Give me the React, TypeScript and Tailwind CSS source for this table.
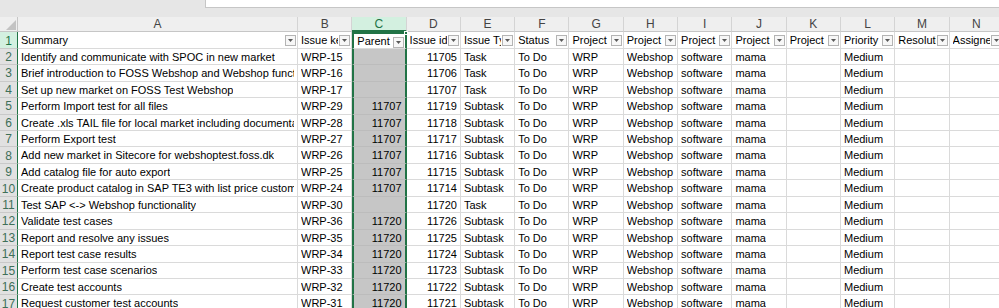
import type { ReactNode } from 'react'

const LETTERS = ['A', 'B', 'C', 'D', 'E', 'F', 'G', 'H', 'I', 'J', 'K', 'L', 'M', 'N']
const HEADERS = ['Summary', 'Issue key', 'Parent Id', 'Issue id', 'Issue Type', 'Status', 'Project key', 'Project name', 'Project type', 'Project lead', 'Project description', 'Priority', 'Resolution', 'Assignee']

// summary, key, parent, id, type
const ISSUES: [string, string, string, string, string][] = [
  ['Identify and communicate with SPOC in new market', 'WRP-15', '', '11705', 'Task'],
  ['Brief introduction to FOSS Webshop and Webshop functionality', 'WRP-16', '', '11706', 'Task'],
  ['Set up new market on FOSS Test Webshop', 'WRP-17', '', '11707', 'Task'],
  ['Perform Import test for all files', 'WRP-29', '11707', '11719', 'Subtask'],
  ['Create .xls TAIL file for local market including documentation', 'WRP-28', '11707', '11718', 'Subtask'],
  ['Perform Export test', 'WRP-27', '11707', '11717', 'Subtask'],
  ['Add new market in Sitecore for webshoptest.foss.dk', 'WRP-26', '11707', '11716', 'Subtask'],
  ['Add catalog file for auto export', 'WRP-25', '11707', '11715', 'Subtask'],
  ['Create product catalog in SAP TE3 with list price customer', 'WRP-24', '11707', '11714', 'Subtask'],
  ['Test SAP <-> Webshop functionality', 'WRP-30', '', '11720', 'Task'],
  ['Validate test cases', 'WRP-36', '11720', '11726', 'Subtask'],
  ['Report and resolve any issues', 'WRP-35', '11720', '11725', 'Subtask'],
  ['Report test case results', 'WRP-34', '11720', '11724', 'Subtask'],
  ['Perform test case scenarios', 'WRP-33', '11720', '11723', 'Subtask'],
  ['Create test accounts', 'WRP-32', '11720', '11722', 'Subtask'],
  ['Request customer test accounts', 'WRP-31', '11720', '11721', 'Subtask'],
]

function FilterButton() {
  return (
    <span className="absolute right-px top-[3px] w-[11px] h-[11px] border border-[#b4b4b4] bg-[#f7f7f7] flex items-center justify-center">
      <svg width="5" height="3" viewBox="0 0 5 3"><polygon points="0,0 5,0 2.5,3" fill="#595959" /></svg>
    </span>
  )
}

function Cell({ col, children, right, head }: { col: number; children?: ReactNode; right?: boolean; head?: boolean }) {
  const sel = col === 2
  let cls = 'relative flex items-center pt-px px-[3px] border-b border-[#dadada] '
  if (sel) cls += 'border-x-2 border-x-[#217346] ' + (head ? 'bg-white border-t-2 border-t-[#217346] ' : 'bg-[#c6c6c6] border-b-[#bcbcbc] ')
  else cls += 'border-r bg-white '
  if (right) cls += 'justify-end '
  return (
    <div className={cls}>
      <span className={`min-w-0 overflow-hidden whitespace-nowrap ${head ? 'flex-1 mr-[10px]' : ''}`}>{children}</span>
      {head && <FilterButton />}
      {head && sel && <span className="absolute -right-[3px] -top-[3px] w-[4px] h-[4px] bg-[#217346] border border-white" />}
    </div>
  )
}

function RowHead({ n }: { n: number }) {
  return (
    <div className={`flex items-center justify-center pt-px border-b border-[#c9c9c9] border-r border-r-[#217346] text-[12px] ${n === 1 ? 'bg-[#d3f0e0] text-[#217346]' : 'bg-[#e1e1e1] text-[#3e6f58]'}`}>
      {n}
    </div>
  )
}

export default function App() {
  return (
    <div className="w-[999px] h-[308px] overflow-hidden bg-white text-[11px] text-black font-['Liberation_Sans',Arial,sans-serif]">
      <div className="h-[17px] bg-[#e6e6e6] flex">
        <div className="w-[205px]" />
        <div className="flex-1 h-[8px] bg-white border-l border-b border-[#c6c6c6]" />
      </div>
      <div className="grid grid-cols-[18px_280px_repeat(13,54.3px)] grid-rows-[15.4px_repeat(17,16.45px)]">
        <div className="bg-[#efefef] border-b border-r border-[#c6c6c6] flex items-end justify-end p-px">
          <svg width="10" height="10" viewBox="0 0 10 10"><polygon points="10,0 10,10 0,10" fill="#c3c3c3" /></svg>
        </div>
        {LETTERS.map((l, i) => (
          <div key={l} className={`flex items-center justify-center text-[12px] border-r border-[#d4d4d4] ${i === 2 ? 'bg-[#d3f0e0] text-[#217346] border-b-2 border-b-[#217346]' : 'bg-[#efefef] text-[#444] border-b border-b-[#c6c6c6]'}`}>
            {l}
          </div>
        ))}

        <RowHead n={1} />
        {HEADERS.map((h, i) => (
          <Cell key={h} col={i} head>{h}</Cell>
        ))}

        {ISSUES.map(([summary, key, parent, id, type], r) => {
          const vals = [summary, key, parent, id, type, 'To Do', 'WRP', 'Webshop Implementation', 'software', 'mama', '', 'Medium', '', '']
          return [
            <RowHead key={`h${r}`} n={r + 2} />,
            ...vals.map((v, i) => (
              <Cell key={`${r}-${i}`} col={i} right={i === 2 || i === 3}>{v}</Cell>
            )),
          ]
        })}
      </div>
    </div>
  )
}
